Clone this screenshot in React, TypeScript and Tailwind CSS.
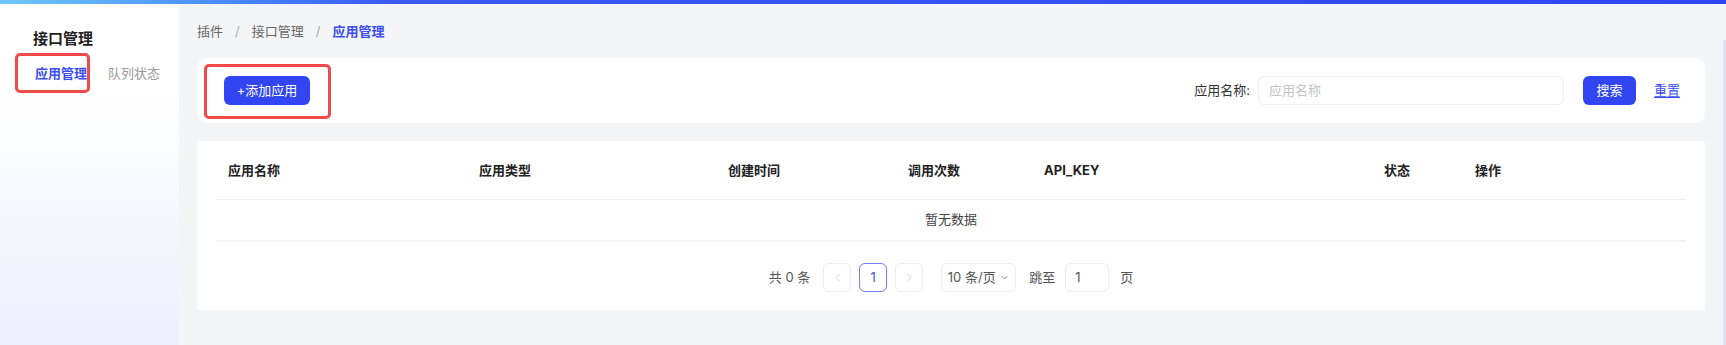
import { ChevronLeft, ChevronRight, ChevronDown } from "lucide-react";

const columns = [
  { label: "应用名称", w: "w-[251px]" },
  { label: "应用类型", w: "w-[249px]" },
  { label: "创建时间", w: "w-[180px]" },
  { label: "调用次数", w: "w-[136px]" },
  { label: "API_KEY", w: "w-[340px]" },
  { label: "状态", w: "w-[91px]" },
  { label: "操作", w: "flex-1" },
];

const App = () => {
  return (
    <div className="h-[345px] flex flex-col overflow-hidden font-['Inter','Noto_Sans_CJK_SC',sans-serif] text-[13px] text-[#333]">
      {/* top bar */}
      <div className="h-[4px] bg-gradient-to-r from-[#6fc8fb] via-[#3a5cf2] via-[22%] to-[#2f45f3]" />

      <div className="flex flex-1">
        {/* Sidebar */}
        <aside className="w-[179px] bg-gradient-to-b from-white from-[25%] to-[#edf0fd] pl-[33px] pt-[25px]">
          <h2 className="text-[15px] leading-[20px] font-semibold text-[#222]">接口管理</h2>
          <div className="flex gap-[21px] mt-[15px] pl-[2px] leading-[18px]">
            <span className="relative text-[#3b4ef5] font-semibold">
              应用管理
              <span className="absolute -left-[20px] -right-[3px] -top-[11px] -bottom-[11px] border-[3px] border-[#f04a4a] rounded-[5px]" />
            </span>
            <span className="text-[#9a9a9a]">队列状态</span>
          </div>
        </aside>

        {/* Main */}
        <main className="flex-1 flex bg-[#f4f5f7]">
          <div className="flex-1 pl-[18px] pr-[18px] pt-[18px]">
            {/* Breadcrumb */}
            <div className="flex items-center leading-[18px] text-[#666]">
              <span>插件</span>
              <span className="mx-[12px] text-[#aaa]">/</span>
              <span>接口管理</span>
              <span className="mx-[12px] text-[#aaa]">/</span>
              <span className="text-[#3b4ef5] font-semibold">应用管理</span>
            </div>

            {/* Search card */}
            <div className="mt-[18px] h-[65px] bg-white rounded-[10px] flex items-center pl-[27px] pr-[25px]">
              <button className="relative h-[29px] w-[86px] rounded-[6px] bg-[#3146f2] text-white leading-none">
                +添加应用
                <span className="absolute -left-[20px] -right-[21px] -top-[12px] -bottom-[14px] border-[3px] border-[#f04a4a] rounded-[5px]" />
              </button>
              <div className="ml-auto flex items-center">
                <span className="text-[#333]">应用名称:</span>
                <div className="ml-[8px] w-[306px] h-[29px] border border-[#eeeeee] rounded-[6px] flex items-center pl-[10px] text-[#c4c4c4]">
                  应用名称
                </div>
                <button className="ml-[19px] w-[53px] h-[29px] rounded-[6px] bg-[#3146f2] text-white leading-none">
                  搜索
                </button>
                <span className="ml-[18px] text-[#3b4ef5] underline underline-offset-2">重置</span>
              </div>
            </div>

            {/* Table card */}
            <div className="mt-[18px] h-[169px] bg-white rounded-[2px] px-[19px] pt-px">
              <div className="flex h-[58px] items-center border-b border-[#f0f0f0]">
                {columns.map((c) => (
                  <div key={c.label} className={`${c.w} pl-[12px] font-bold text-[#222]`}>
                    {c.label}
                  </div>
                ))}
              </div>
              <div className="h-[42px] flex items-center justify-center border-b-2 border-[#f2f2f2] text-[#444]">
                暂无数据
              </div>
              <div className="mt-[21px] flex items-center justify-center text-[#555]">
                <span>共 0 条</span>
                <div className="ml-[13px] w-[28px] h-[29px] border border-[#eeeeee] rounded-[6px] flex items-center justify-center text-[#c8c8c8]">
                  <ChevronLeft size={13} strokeWidth={1.5} />
                </div>
                <div className="ml-[8px] w-[28px] h-[29px] border border-[#6f7ef5] rounded-[6px] flex items-center justify-center text-[#3b4ef5]">
                  1
                </div>
                <div className="ml-[8px] w-[28px] h-[29px] border border-[#eeeeee] rounded-[6px] flex items-center justify-center text-[#c8c8c8]">
                  <ChevronRight size={13} strokeWidth={1.5} />
                </div>
                <div className="ml-[18px] w-[75px] h-[29px] border border-[#eeeeee] rounded-[6px] flex items-center justify-center gap-[3px] text-[#555]">
                  10 条/页
                  <ChevronDown size={11} strokeWidth={2} className="text-[#888]" />
                </div>
                <span className="ml-[13px]">跳至</span>
                <div className="ml-[10px] w-[44px] h-[29px] border border-[#eeeeee] rounded-[6px] flex items-center pl-[9px] text-[#555]">
                  1
                </div>
                <span className="ml-[11px]">页</span>
              </div>
            </div>
          </div>
          {/* scrollbar */}
          <div className="w-[3px] mt-[36px] bg-[#dfe3ef]" />
        </main>
      </div>
    </div>
  );
};

export default App;
